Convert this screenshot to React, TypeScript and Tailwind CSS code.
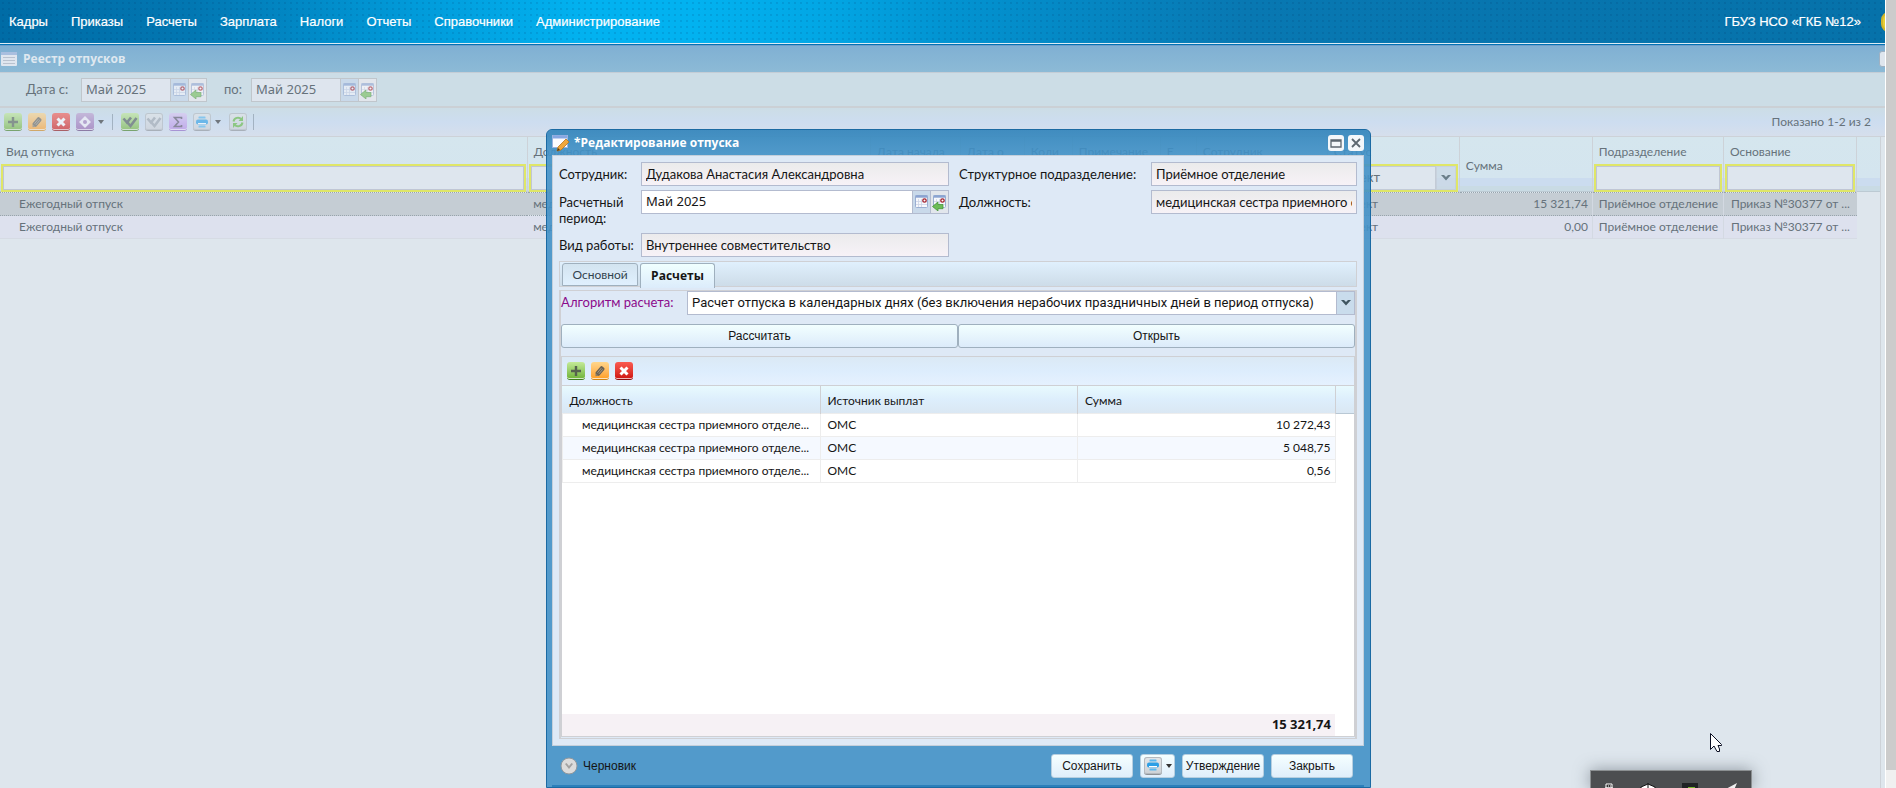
import type { ReactNode } from "react";

const ui = "font-['Lato','Roboto','Noto_Sans',sans-serif]";
const heading = "font-['Open_Sans','Noto_Sans',sans-serif] font-bold";

const menu = ["Кадры", "Приказы", "Расчеты", "Зарплата", "Налоги", "Отчеты", "Справочники", "Администрирование"];

type Column = { title: string; width: string; filter?: "text" | "status" };

const columns: Column[] = [
  { title: "Вид отпуска", width: "w-[527px]", filter: "text" },
  { title: "Должность", width: "w-[343px]", filter: "text" },
  { title: "Дата начала", width: "w-[90px]" },
  { title: "Дата о", width: "w-[64px]" },
  { title: "Коли", width: "w-[48px]" },
  { title: "Примечание", width: "w-[88px]" },
  { title: "Е", width: "w-[36px]" },
  { title: "Сотрудник", width: "w-[131px]", filter: "text" },
  { title: "Статус", width: "w-[132px]", filter: "status" },
  { title: "Сумма", width: "w-[133px]" },
  { title: "Подразделение", width: "w-[131px]", filter: "text" },
  { title: "Основание", width: "w-[133px]", filter: "text" },
];

const vacations = [
  { id: 1, sum: "15 321,74", selected: true },
  { id: 2, sum: "0,00", selected: false },
];

const payments = [
  { id: 1, source: "ОМС", sum: "10 272,43" },
  { id: 2, source: "ОМС", sum: "5 048,75" },
  { id: 3, source: "ОМС", sum: "0,56" },
];

function Tile({ tone, label, children }: { tone: string; label: string; children: ReactNode }) {
  return (
    <button
      type="button"
      aria-label={label}
      className={`flex h-[18px] w-[18px] shrink-0 items-center justify-center rounded-[3px] border-b bg-linear-to-b shadow-[inset_0_-1px_0_rgba(255,255,255,0.7)] ${tone}`}
    >
      <svg viewBox="0 0 16 16" className="h-4 w-4">
        {children}
      </svg>
    </button>
  );
}

const green = "border-[#3f7d1c] from-[#c4ea97] to-[#6fb336]";
const amber = "border-[#d08412] from-[#ffd68a] to-[#ff9f1c]";
const red = "border-[#8e0d0d] from-[#fb5a50] to-[#cf0d0d]";
const violet = "border-[#5f3b75] from-[#bfa0cf] to-[#9363ae]";
const lilac = "border-[#8d63c4] from-[#dbc6f3] to-[#b78be6]";
const grey = "border-[#8d9297] from-[#e4e6e8] to-[#cdd1d5] ring-1 ring-inset ring-[#b4b9be]";

const plus = <path d="M8 3v10M3 8h10" stroke="#56624f" strokeWidth="2.4" />;
const cross = <path d="M4.500 4.500l7 7M11.500 4.500l-7 7" stroke="#fff" strokeWidth="3" />;
const pencil = (
  <g transform="rotate(-50 8 8)">
    <rect x="3" y="5.500" width="10" height="5" rx="1.500" fill="#6b6252" />
    <path d="M5 7.200h6M5 9h6" stroke="#b8ab94" strokeWidth="0.700" />
    <path d="M3.500 6L1 8l2.500 2z" fill="#8a7d66" />
  </g>
);
const checks = (
  <g fill="none" stroke="currentColor" strokeWidth="2.600">
    <path d="M1.500 4.500L5 8.500l4-5" />
    <path d="M5 8l3.500 4 6-8" />
  </g>
);
const printer = (
  <g>
    <rect x="4.500" y="2.500" width="7" height="2" rx="0.500" fill="#58b8f0" />
    <rect x="2" y="5.500" width="12" height="5" rx="2" fill="#2b9fe6" />
    <rect x="4" y="9" width="8" height="1.200" fill="#fff" />
    <rect x="4.500" y="11.500" width="7" height="2" rx="0.500" fill="#58b8f0" />
  </g>
);

function Caret() {
  return <span className="ml-1 h-0 w-0 border-x-[3px] border-t-4 border-x-transparent border-t-[#333]" />;
}

function Calendar({ back = false }: { back?: boolean }) {
  return (
    <svg viewBox="0 0 16 18" className="h-[18px] w-4">
      <rect x="1.500" y="2.500" width="12" height="12" rx="1" fill="#f7f8fc" stroke="#9aaed2" />
      <path d="M1.500 3.500h12" stroke="#8ba4d2" strokeWidth="2.400" />
      <path d="M4.500 6v8M7.500 6v8M2 8.500h11M2 11.500h11" stroke="#ccd3e4" strokeWidth="0.800" />
      <circle cx="10.500" cy="7.500" r="1.700" fill="#fff" stroke="#a3202c" strokeWidth="1.300" />
      {back && <path d="M0.500 13.500L6 9v2.500h5v4.200H6V18z" fill="#6cbc58" stroke="#3d8f31" strokeWidth="0.700" />}
    </svg>
  );
}

function MonthField({ id, className, frame, muted = false }: { id: string; className: string; frame: string; muted?: boolean }) {
  const icon = muted ? "opacity-60" : "";
  return (
    <div className={`flex h-6 border ${frame} ${className}`}>
      <input id={id} defaultValue="Май 2025" className="min-w-0 flex-1 bg-transparent px-1 font-['Noto_Sans',sans-serif] text-[13px] outline-none" />
      <button type="button" aria-label="Выбрать дату" className={`flex w-[18px] items-center justify-center border-l bg-[#c9d9ea] ${frame}`}>
        <span className={icon}><Calendar /></span>
      </button>
      <button type="button" aria-label="Вернуть дату" className={`flex w-[18px] items-center justify-center border-l bg-[#e2e6ec] ${frame}`}>
        <span className={icon}><Calendar back /></span>
      </button>
    </div>
  );
}

function Chevron() {
  return (
    <svg viewBox="0 0 12 8" className="h-2 w-3">
      <path d="M1 1h3l2 2 2-2h3L6 6.500z" fill="#3f5560" />
    </svg>
  );
}

function TopMenu() {
  return (
    <header className="relative flex h-[45px] shrink-0 items-center overflow-hidden border-b border-[#0273b4] bg-[linear-gradient(90deg,#006ca6_0%,#0277b2_10%,#019bda_22%,#02b2f0_31%,#02b2f0_37%,#02a6e4_44%,#0294d2_50%,#0878b2_66%,#0672aa_100%)] font-['Liberation_Sans',Arial,sans-serif] text-[13px] text-white">
      <div className="absolute inset-0 bg-[radial-gradient(rgba(0,40,90,0.12)_1px,transparent_1.500px)] bg-[size:6px_6px]" />
      <nav className="relative flex flex-1 gap-[23px] pl-[9px]">
        {menu.map((item) => (
          <a key={item} href="#" className="[-webkit-text-stroke:0.200px_white]">{item}</a>
        ))}
      </nav>
      <span className="relative pr-6 [-webkit-text-stroke:0.200px_white]">ГБУЗ НСО «ГКБ №12»</span>
      <span className="absolute top-3 -right-3 h-5 w-4 rounded-full border-2 border-[#cfb52c] bg-[#e8cf35]" />
      <span className="absolute inset-x-0 bottom-0 h-px bg-[#dcecf5]" />
    </header>
  );
}

function FilterCell({ column }: { column: Column }) {
  return (
    <th className="h-7 border-r border-[#cdd2d8] p-0 font-normal">
      {column.filter === "text" && (
        <div className="mx-px h-7 border-2 border-[#dfe668]">
          <input aria-label={column.title} className="block h-full w-full border border-[#c0c6d4] bg-[#dee6ee] outline-none" />
        </div>
      )}
      {column.filter === "status" && (
        <div className="mx-px flex h-7 border-2 border-[#dfe668]">
          <select aria-label={column.title} className="min-w-0 flex-1 appearance-none border border-[#c3cbd6] bg-[#dee6ee] px-1 text-[13px] outline-none">
            <option>Проект</option>
          </select>
          <span className="flex w-5 items-center justify-center border border-[#c3cbd6] bg-[#cbd9e6] opacity-70">
            <Chevron />
          </span>
        </div>
      )}
    </th>
  );
}

function Registry() {
  return (
    <main className="flex min-h-0 flex-1 flex-col bg-[#dee6ed] text-xs text-[#66727b]">
      <div className="flex h-7 shrink-0 items-center gap-[6px] border-t border-b border-t-[#6d9dcb] border-b-[#c4cdd6] bg-linear-to-b from-[#80b0d3] to-[#8cbad6] pl-px">
        <svg viewBox="0 0 16 14" className="h-[14px] w-4">
          <rect width="16" height="14" rx="1" fill="#dfe6ef" />
          <path d="M0 1.500h16" stroke="#a9bfdf" strokeWidth="3" />
          <path d="M2 5.500h12M2 8.500h12M2 11.500h12" stroke="#b9c2cf" />
        </svg>
        <h1 className={`flex-1 text-[12px] text-[#dfe8f0] ${heading}`}>Реестр отпусков</h1>
        <button type="button" aria-label="Свернуть" className="-mr-3 h-4 w-[18px] rounded-[3px] border border-[#9fb1c2] bg-[#dfe6ee]" />
      </div>
      <div className="flex h-[35px] shrink-0 items-center border-b-2 border-[#cbd0d5] bg-[#ccdde6] pl-[26px] text-[13px]">
        <label htmlFor="from" className="w-[55px]">Дата с:</label>
        <MonthField id="from" className="w-[126px] bg-[#dee5ee]" frame="border-[#c0c6cc]" muted />
        <label htmlFor="to" className="w-[44px] pl-[17px]">по:</label>
        <MonthField id="to" className="w-[126px] bg-[#dee5ee]" frame="border-[#c0c6cc]" muted />
      </div>
      <div className="flex h-[29px] shrink-0 items-center border-b border-[#cdd2d8] bg-linear-to-b from-[#ccdde6] via-[#cdddf0] to-[#d6dfec] pr-[14px] pl-1">
        <div className="flex flex-1 items-center gap-[6px] opacity-60">
          <Tile tone={green} label="Добавить">{plus}</Tile>
          <Tile tone={amber} label="Изменить">{pencil}</Tile>
          <Tile tone={red} label="Удалить">{cross}</Tile>
          <div className="flex items-center">
            <Tile tone={violet} label="Действия">
              <path d="M8 3L13 8l-5 5-5-5z" fill="#f4eff7" stroke="#f4eff7" strokeWidth="1.400" />
              <circle cx="8" cy="8" r="2" fill="#a27dba" />
            </Tile>
            <Caret />
          </div>
          <span className="mx-[2px] h-4 w-px bg-[#8796a5]" />
          <span className="flex text-[#4e5a55]"><Tile tone={green} label="Утвердить">{checks}</Tile></span>
          <span className="flex text-[#a0a6ac]"><Tile tone={grey} label="Снять утверждение">{checks}</Tile></span>
          <Tile tone={lilac} label="Итоги">
            <path d="M11.500 5V3.500h-7L8.500 8l-4 4.500h7V11" fill="none" stroke="#5b5266" strokeWidth="1.600" />
          </Tile>
          <div className="flex items-center">
            <Tile tone={grey} label="Печать">{printer}</Tile>
            <Caret />
          </div>
          <span className="ml-[2px] flex">
            <Tile tone={grey} label="Обновить">
              <path d="M3.500 7.500a4.500 4.500 0 0 1 8-2M12.500 8.500a4.500 4.500 0 0 1-8 2" fill="none" stroke="#62b93c" strokeWidth="2" />
              <path d="M13 2v5H8.500zM3 14V9h4.500z" fill="#62b93c" />
            </Tile>
          </span>
          <span className="h-4 w-px bg-[#8796a5]" />
        </div>
        <span className="text-xs">Показано 1-2 из 2</span>
      </div>
      <div className="mr-1 min-h-0 flex-1 border-r border-[#cdd2d8]">
        <div className="h-[55px] border-b border-[#bccad3] bg-[linear-gradient(#d5e6ee_0%,#d4e5ef_75%,#cbdcef_76%,#cbdcef_90%,#c9dbe4_91%)]">
          <table className="w-[1857px] table-fixed border-collapse text-left font-normal">
            <colgroup>
              {columns.map((c) => <col key={c.title} className={c.width} />)}
            </colgroup>
            <thead>
              <tr className="h-[27px]">
                {columns.map((c) => (
                  <th
                    key={c.title}
                    rowSpan={c.title === "Сумма" ? 2 : 1}
                    className="overflow-hidden border-r border-[#cdd2d8] p-0 pt-[2px] pl-[6px] font-normal whitespace-nowrap"
                  >
                    {c.title}
                  </th>
                ))}
              </tr>
              <tr>
                {columns.filter((c) => c.title !== "Сумма").map((c) => <FilterCell key={c.title} column={c} />)}
              </tr>
            </thead>
            <tbody>
              {vacations.map((v) => (
                <tr
                  key={v.id}
                  className={`h-[23px] ${v.selected ? "border-y border-dotted border-[#98a4ad] bg-[#c5cdd4]" : "border-b border-[#d6dbe4] bg-[#dde1ee]"}`}
                >
                  <td className="p-0 pl-[19px]">Ежегодный отпуск</td>
                  <td className="overflow-hidden p-0 pl-[6px] whitespace-nowrap">медицинская сестра</td>
                  <td colSpan={6} />
                  <td className="p-0 pl-[10px]">Проект</td>
                  <td className="p-0 pr-1 text-right">{v.sum}</td>
                  <td className="border-x border-[#d3d9e2] p-0 pl-[6px] whitespace-nowrap">Приёмное отделение</td>
                  <td className="p-0 pl-[7px] whitespace-nowrap">Приказ №30377 от ...</td>
                </tr>
              ))}
            </tbody>
          </table>
        </div>
      </div>
    </main>
  );
}

const readOnly = "h-6 border border-[#b3bbcf] bg-linear-to-b from-[#ebebec] to-[#f7f2f7] px-1 text-[13px] outline-none";
const wide = "flex h-6 flex-1 items-center justify-center rounded-[3px] border border-[#9fb0be] bg-linear-to-b from-[#f2ffff] to-[#dcebfa]";
const footerButton = "flex h-6 items-center justify-center rounded-[3px] border border-[#b7cfe0] bg-linear-to-b from-[#f5ffff] to-[#e0eefb]";

function PaymentsPanel() {
  return (
    <section className="mt-2 flex min-h-0 flex-1 flex-col border border-[#cfd0d4] bg-white text-xs">
      <div className="flex h-[29px] shrink-0 items-center gap-[6px] border-b border-[#cfd0d4] bg-linear-to-b from-[#dbe9f5] via-[#ddedfd] to-[#e5f1fe] pl-[5px]">
        <Tile tone={green} label="Добавить строку">{plus}</Tile>
        <Tile tone={amber} label="Изменить строку">{pencil}</Tile>
        <Tile tone={red} label="Удалить строку">{cross}</Tile>
      </div>
      <div className="h-[27px] bg-linear-to-b from-[#e8fafe] via-[#ddeefc] to-[#dae7f3]">
        <table className="w-full table-fixed border-collapse text-left">
          <colgroup>
            <col />
            <col />
            <col />
            <col className="w-[19px]" />
          </colgroup>
          <thead>
            <tr className="h-[27px] border-b border-[#b9c8d4]">
              {["Должность", "Источник выплат", "Сумма"].map((t) => (
                <th key={t} className="border-r border-[#cfd0d4] p-0 pt-1 pl-[7px] font-normal">{t}</th>
              ))}
              <td />
            </tr>
          </thead>
          <tbody>
            {payments.map((p) => (
              <tr key={p.id} className="h-[23px] odd:bg-white even:bg-[#f5f9ff]">
                <td className="border border-[#ededed] p-0 pt-px pl-[19px] whitespace-nowrap">медицинская сестра приемного отделе...</td>
                <td className="border border-[#ededed] p-0 pt-px pl-[7px]">{p.source}</td>
                <td className="border border-[#ededed] p-0 pt-px pr-1 text-right">{p.sum}</td>
                <td className="bg-white" />
              </tr>
            ))}
          </tbody>
        </table>
      </div>
      <div className={`mt-auto mr-[19px] flex h-[22px] items-center justify-end bg-[#f6f1f5] pr-1 text-[13px] ${heading}`}>15 321,74</div>
    </section>
  );
}

function VacationDialog() {
  return (
    <section
      role="dialog"
      aria-label="Редактирование отпуска"
      className="absolute top-[129px] bottom-0 left-[546px] flex w-[825px] flex-col rounded-t-md border border-[#1b6aa3] bg-[#4391c7]/90 pr-[6px] pl-[5px] text-[13px] text-[#151515]"
    >
      <div className="-mr-[6px] -ml-[5px] flex h-[25px] shrink-0 items-center gap-1 rounded-t-md bg-linear-to-b from-[#2f80b4]/50 to-transparent pr-[6px] pl-[5px] text-white">
        <svg viewBox="0 0 18 18" className="h-[18px] w-[18px]">
          <rect x="0.500" y="1.500" width="15" height="12" fill="#fdfdff" stroke="#9ab4e0" />
          <path d="M1 3h14" stroke="#86a7e2" strokeWidth="3" />
          <path d="M5 17l1-4 8-8 3 3-8 8z" fill="#f0a73c" stroke="#b9761c" strokeWidth="0.800" />
          <path d="M5 17l1-3 2 2z" fill="#5b3b12" />
        </svg>
        <h2 className={`flex-1 text-[12px] ${heading}`}>*Редактирование отпуска</h2>
        <button type="button" aria-label="Развернуть" className="flex h-4 w-4 items-center justify-center rounded-[3px] bg-[#f4f7fa]">
          <svg viewBox="0 0 12 12" className="h-3 w-3"><path d="M1 3h10v7H1zM1 4h10" fill="none" stroke="#5d6770" strokeWidth="1.300" /></svg>
        </button>
        <button type="button" aria-label="Закрыть окно" className="flex h-4 w-4 items-center justify-center rounded-[3px] bg-[#f4f7fa]">
          <svg viewBox="0 0 12 12" className="h-3 w-3"><path d="M2 2l8 8M10 2l-8 8" stroke="#5d6770" strokeWidth="1.800" /></svg>
        </button>
      </div>
      <div className="flex min-h-0 flex-1 flex-col border border-[#c4cfdb] bg-[#dee9f6] px-[6px] pt-[6px] pb-[6px]">
        <div className="grid shrink-0 grid-cols-[82px_308px_10px_192px_1fr] gap-y-1">
          <label htmlFor="employee" className="leading-6">Сотрудник:</label>
          <input id="employee" readOnly value="Дудакова Анастасия Александровна" className={readOnly} />
          <span />
          <label htmlFor="department" className="leading-6">Структурное подразделение:</label>
          <input id="department" readOnly value="Приёмное отделение" className={`min-w-0 ${readOnly}`} />
          <label htmlFor="period" className="h-[39px] pt-1 leading-4">Расчетный период:</label>
          <MonthField id="period" className="bg-white" frame="border-[#b3bbcf]" />
          <span />
          <label htmlFor="position" className="leading-6">Должность:</label>
          <input id="position" readOnly value="медицинская сестра приемного отделения" className={`min-w-0 ${readOnly}`} />
          <label htmlFor="work" className="leading-6">Вид работы:</label>
          <input id="work" readOnly value="Внутреннее совместительство" className={readOnly} />
        </div>
        <div role="tablist" className="mt-1 flex h-[26px] shrink-0 gap-[2px] border border-[#cfd0d4] bg-linear-to-b from-[#e0f0fd] to-[#cddce8] px-[2px] pt-px">
          <button role="tab" type="button" aria-selected="false" className="w-[76px] rounded-t-[3px] border border-[#9fb0be] bg-linear-to-b from-[#d3e4f0] to-[#e0f0fe] text-xs text-[#33434f]">Основной</button>
          <button role="tab" type="button" aria-selected="true" className={`h-[25px] w-[75px] rounded-t-[3px] border border-b-0 border-[#9fb0be] bg-linear-to-b from-[#f0ffff] to-[#dcecfb] text-xs ${heading}`}>Расчеты</button>
        </div>
        <div className="mt-[3px] flex min-h-0 flex-1 flex-col border border-[#cfd0d4] border-x-2 pb-px">
          <div className="flex shrink-0 items-center">
            <label htmlFor="algorithm" className="w-[126px] text-[#8b0a8b]">Алгоритм расчета:</label>
            <div className="flex h-6 flex-1 border border-[#b3bbcf] bg-white">
              <select id="algorithm" className="min-w-0 flex-1 appearance-none bg-transparent px-1 font-['Roboto',sans-serif] outline-none">
                <option>Расчет отпуска в календарных днях (без включения нерабочих праздничных дней в период отпуска)</option>
              </select>
              <span className="flex w-[18px] items-center justify-center border-l border-[#b3bbcf] bg-[#c9dcec]"><Chevron /></span>
            </div>
          </div>
          <div className="mt-[9px] flex shrink-0 font-['Liberation_Sans',sans-serif] text-xs">
            <button type="button" className={wide}>Рассчитать</button>
            <button type="button" className={wide}>Открыть</button>
          </div>
          <PaymentsPanel />
        </div>
      </div>
      <footer className="flex h-[41px] shrink-0 items-center gap-[5px] border-b-2 border-[#2c7fba] pr-[11px] pl-2 font-['Liberation_Sans',sans-serif] text-xs">
        <svg viewBox="0 0 18 18" className="h-[18px] w-[18px]">
          <circle cx="9" cy="9" r="8" fill="#dcdcdc" stroke="#8f979d" />
          <path d="M5 7l4 5 4-5-1.500-1L9 9 6.500 6z" fill="#a2a2a2" />
        </svg>
        <span className="flex-1">Черновик</span>
        <div className="flex gap-[7px]">
          <button type="button" className={`w-[82px] ${footerButton}`}>Сохранить</button>
          <div className={`w-[35px] ${footerButton}`}>
            <Tile tone={grey} label="Печать документа">{printer}</Tile>
            <Caret />
          </div>
          <button type="button" className={`w-[82px] ${footerButton}`}>Утверждение</button>
          <button type="button" className={`w-[82px] ${footerButton}`}>Закрыть</button>
        </div>
      </footer>
    </section>
  );
}

function TrayPopup() {
  return (
    <div className="absolute bottom-0 left-[1590px] flex h-[18px] w-[162px] items-start justify-around overflow-hidden border border-b-0 border-[#8b8f91] bg-[#4c4e50] pt-3 shadow-[0_0_16px_rgba(60,70,80,0.5)]">
      <svg viewBox="0 0 10 12" className="h-3 w-[10px] shrink-0"><path d="M2 1h6v4H2zM1 5h8v6H1z" fill="#333" stroke="#fff" /><path d="M4 3h1M6 3h1" stroke="#fff" /></svg>
      <svg viewBox="0 0 16 16" className="h-4 w-4 shrink-0"><path d="M8 1l7 3v5l-7 6-7-6V4z" fill="#fff" stroke="#111" /><path d="M8 0v15" stroke="#111" /></svg>
      <svg viewBox="0 0 16 16" className="h-4 w-4 shrink-0"><rect width="16" height="16" fill="#202224" /><rect x="6" y="4" width="7" height="7" fill="#76b82a" /></svg>
      <svg viewBox="0 0 14 14" className="h-[14px] w-[14px] shrink-0"><path d="M13 0L0 7l5 2 2 5z" fill="#f0f0f0" /></svg>
    </div>
  );
}

export default function App() {
  return (
    <div className={`relative flex h-screen overflow-hidden bg-[#f0f0f0] ${ui}`}>
      <div className="flex min-w-0 flex-1 flex-col overflow-hidden">
        <TopMenu />
        <Registry />
      </div>
      <div className="w-[11px] shrink-0 border-l border-white">
        <div className="h-[770px] bg-[#cccccc]" />
      </div>
      <VacationDialog />
      <TrayPopup />
      <svg viewBox="0 0 12 20" className="absolute top-[733px] left-[1710px] h-5 w-3">
        <path d="M0.500 0.500v16l3.500-3.500 3 5.500h2.500V16L8 12.500h3.500v-1z" fill="#fff" stroke="#0b0f22" />
      </svg>
    </div>
  );
}
